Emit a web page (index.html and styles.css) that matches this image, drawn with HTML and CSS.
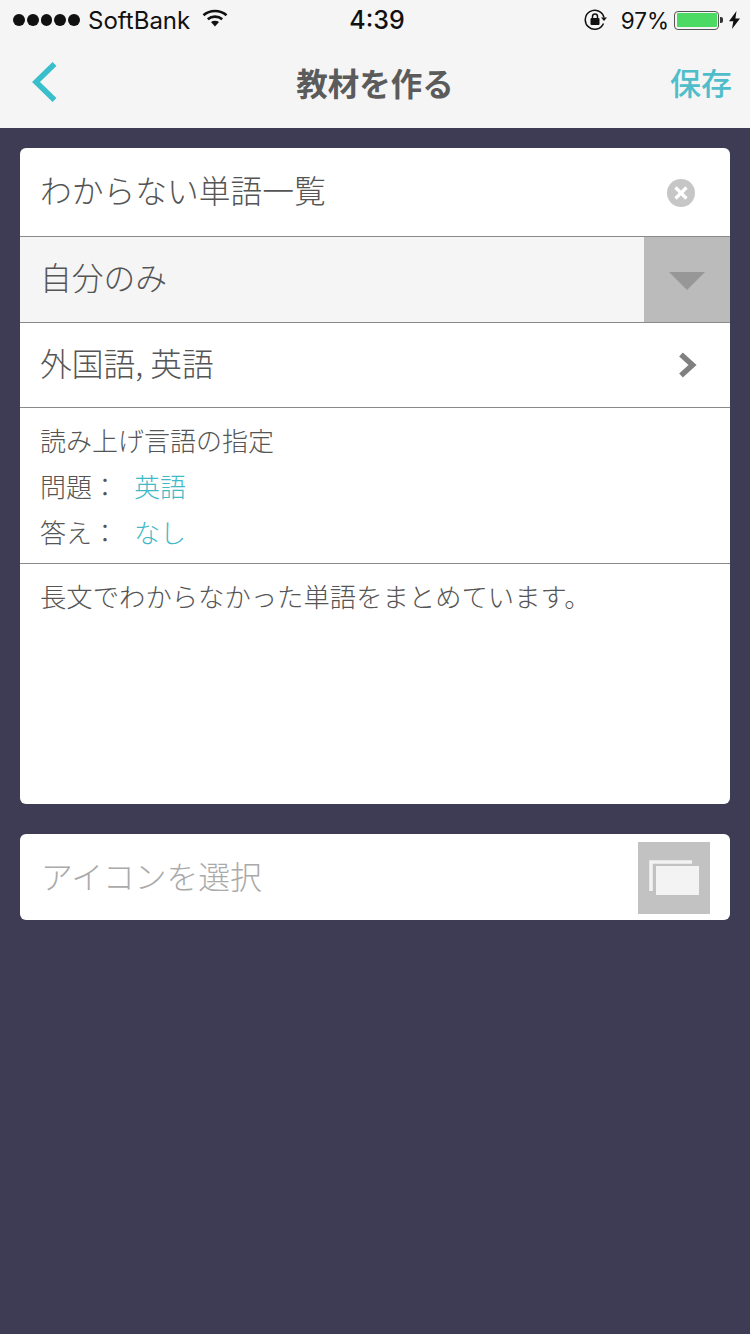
FILE: index.html
```html
<!DOCTYPE html>
<html lang="ja">
<head>
<meta charset="utf-8">
<title>教材を作る</title>
<link rel="stylesheet" href="styles.css">
</head>
<body>
<header class="top">
  <div class="status">
    <div class="status-left">
      <span class="dots"><i></i><i></i><i></i><i></i><i></i></span>
      <span class="carrier">SoftBank</span>
      <svg class="wifi" width="26" height="18" viewBox="0 0 26 18"><path d="M1.500 6.200C7.800.6 18.200.6 24.500 6.200" fill="none" stroke="#111" stroke-width="2.600"/><path d="M5.800 10.200c4-3.400 10.400-3.400 14.400 0" fill="none" stroke="#111" stroke-width="2.600"/><path d="M9 13c2.300-1.700 5.700-1.700 8 0l-4 4.600z" fill="#111"/></svg>
    </div>
    <div class="clock">4:39</div>
    <div class="status-right">
      <svg class="lock" width="24" height="22" viewBox="0 0 24 22"><path d="M19.500 14.500A9.500 9.500 0 1 1 20 8.500" fill="none" stroke="#111" stroke-width="1.500"/><path d="M17 8.500h6l-3 3.500z" fill="#111"/><rect x="6.500" y="9" width="9" height="7" rx="1" fill="#111"/><path d="M8.500 9V7.500a2.500 2.500 0 0 1 5 0V9" fill="none" stroke="#111" stroke-width="1.500"/></svg>
      <span class="pct">97%</span>
      <span class="battery"><span class="level"></span></span><span class="nub"></span>
      <svg class="bolt" width="11" height="18" viewBox="0 0 11 18"><path d="M7.500 0 0 10.200h4.300L3 18l8-10.500H6.400z" fill="#111"/></svg>
    </div>
  </div>
  <nav class="nav">
    <svg class="back" width="28" height="42" viewBox="0 0 28 42"><path d="M23.500 3 5 21l18.500 18" fill="none" stroke="#38bfcb" stroke-width="5.500"/></svg>
    <h1 class="title">教材を作る</h1>
    <span class="save">保存</span>
  </nav>
</header>
<main class="content">
  <section class="card">
    <div class="row row-name">
      <span class="big">わからない単語一覧</span>
      <span class="clear"><svg width="28" height="28" viewBox="0 0 28 28"><circle cx="14" cy="14" r="14" fill="#c6c6c6"/><path d="M8.500 8.500l11 11M19.500 8.500l-11 11" stroke="#fff" stroke-width="3.200"/></svg></span>
    </div>
    <div class="row row-select">
      <span class="big">自分のみ</span>
      <span class="drop"><span class="tri"></span></span>
    </div>
    <div class="row row-cat">
      <span class="big">外国語, 英語</span>
      <svg class="chev" width="20" height="26" viewBox="0 0 20 26"><path d="M3 2.500 14.500 13 3 23.500" fill="none" stroke="#808080" stroke-width="5.500"/></svg>
    </div>
    <div class="row-lang">
      <p class="small">読み上げ言語の指定</p>
      <p class="small"><span class="lab">問題：</span><span class="val">英語</span></p>
      <p class="small"><span class="lab">答え：</span><span class="val">なし</span></p>
    </div>
    <div class="row-desc">長文でわからなかった単語をまとめています。</div>
  </section>
  <section class="card card-icon">
    <span class="big muted">アイコンを選択</span>
    <span class="pick"><svg width="50" height="36" viewBox="0 0 50 36"><path d="M2 31V2h41" fill="none" stroke="#f3f3f3" stroke-width="3.500"/><rect x="7" y="6" width="43" height="29" fill="#f3f3f3"/></svg></span>
  </section>
</main>
</body>
</html>
```
FILE: styles.css
```css
* { box-sizing: border-box; }
html, body { margin: 0; padding: 0; }
body {
  width: 750px;
  height: 1334px;
  background: #3e3b54;
  font-family: "Noto Sans CJK JP", "Noto Sans", sans-serif;
  font-weight: 300;
  color: #555;
  overflow: hidden;
}
p { margin: 0; }
.top { background: #f5f5f5; height: 128px; }
.status {
  height: 40px;
  display: grid;
  grid-template-columns: 1fr auto 1fr;
  align-items: center;
  color: #111;
  font-family: Inter, "Liberation Sans", sans-serif;
  font-weight: 400;
  font-size: 24px;
  padding: 0 10px 0 13px;
}
.status-left { display: flex; align-items: center; }
.dots { display: flex; gap: 2px; margin-right: 8px; }
.dots i { width: 11.800px; height: 12px; border-radius: 50%; background: #111; display: block; }
.carrier { margin-right: 12px; font-size: 24px; }
.wifi { margin-top: -4px; }
.clock { font-weight: 500; font-size: 25px; padding-left: 1px; }
.status-right { display: flex; align-items: center; justify-content: flex-end; }
.lock { margin-right: 13px; }
.pct { margin-right: 5px; font-size: 22.500px; }
.battery { width: 45px; height: 19px; border: 1.500px solid #555; border-radius: 4px; padding: 1.500px; display: block; }
.level { display: block; height: 100%; background: #4cd964; border-radius: 1px; }
.nub { width: 3px; height: 6px; background: #333; margin: 0 6px 0 1px; border-radius: 0 2px 2px 0; }
.nav {
  height: 88px;
  display: flex;
  align-items: center;
  justify-content: center;
  position: relative;
}
.back { position: absolute; left: 31px; top: 21px; }
.title { margin: -4px 0 0; font-size: 31.500px; font-weight: 700; color: #5b5b5b; line-height: 88px; letter-spacing: 0; }
.save { position: absolute; right: 18px; top: -2px; line-height: 88px; font-size: 31px; font-weight: 500; color: #4fbdca; }
.content { padding: 20px 20px 0; }
.card { background: #fff; border-radius: 6px; overflow: hidden; }
.row { display: flex; align-items: center; justify-content: space-between; padding-left: 20px; border-bottom: 1px solid #8a8a8a; }
.big { font-size: 31.750px; color: #555; line-height: 40px; margin-top: -7px; }
.row-name { height: 89px; }
.clear { display: flex; margin-right: 35px; margin-top: 2px; }
.row-select { height: 86px; background: #f5f5f5; align-items: stretch; }
.row-select .big { align-self: center; }
.drop { width: 86px; background: #bbb; display: flex; align-items: center; justify-content: center; }
.tri { width: 0; height: 0; border-left: 18px solid transparent; border-right: 18px solid transparent; border-top: 18px solid #979797; margin-top: 3px; }
.row-cat { height: 85px; }
.chev { margin-right: 32px; }
.row-lang { height: 156px; padding: 9px 20px 0; border-bottom: 1px solid #8a8a8a; }
.small { font-size: 26px; line-height: 46px; color: #555; display: flex; }
.lab { width: 94px; }
.val { color: #43b9c8; }
.row-desc { height: 240px; padding: 10px 20px; font-size: 26.350px; line-height: 44px; color: #555; white-space: nowrap; }
.card-icon { margin-top: 30px; height: 86px; display: flex; align-items: center; justify-content: space-between; padding: 2px 20px 0 21px; }
.muted { color: #aaa; }
.pick { width: 72px; height: 72px; background: #c2c2c2; display: flex; align-items: center; justify-content: center; }
```
